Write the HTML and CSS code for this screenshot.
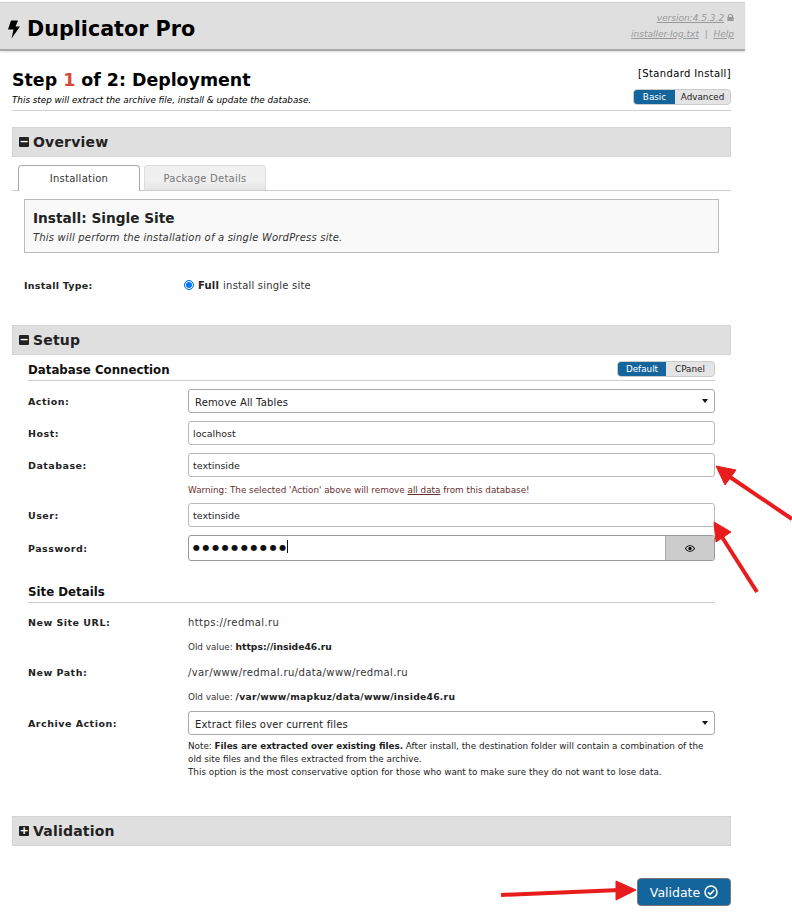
FILE: index.html
```html
<!DOCTYPE html>
<html lang="en">
<head>
  <meta charset="UTF-8" />
  <title>Duplicator Pro</title>
  <link rel="stylesheet" href="styles.css">
</head>
<body>
  <header class="top">
    <h1><svg class="bolt" viewBox="0 0 12 18"><path d="M3 0h7L7.6 6H12L3.5 18l2-9H0z"/></svg> Duplicator Pro</h1>
    <div class="top-links">
      <div><a href="#">version:4.5.3.2</a> <svg class="lock" viewBox="0 0 8 8"><path d="M1 3.5V2.5a3 2.5 0 0 1 6 0v1h.6V8H.4V3.5zM2.3 3.5h3.4v-1a1.7 1.5 0 0 0-3.4 0z"/></svg></div>
      <div><a href="#">installer-log.txt</a> &nbsp;|&nbsp; <a href="#">Help</a></div>
    </div>
  </header>

  <main class="wrap">
    <div class="step-head">
      <div>
        <h2>Step <span class="red">1</span> of 2: Deployment</h2>
        <p class="sub">This step will extract the archive file, install &amp; update the database.</p>
      </div>
      <div class="mode">
        <div class="mode-name">[Standard Install]</div>
        <div class="toggle"><span class="on">Basic</span><span>Advanced</span></div>
      </div>
    </div>

    <div class="bar"><span class="box-icon">&minus;</span>Overview</div>
    <div class="tabs">
      <div class="tab active">Installation</div>
      <div class="tab">Package Details</div>
    </div>
    <div class="panel">
      <h3>Install: Single Site</h3>
      <p>This will perform the installation of a single WordPress site.</p>
    </div>
    <div class="install-type">
      <label>Install Type:</label>
      <div class="radio-row"><span class="radio"></span><b>Full</b> install single site</div>
    </div>

    <div class="bar setup-bar"><span class="box-icon">&minus;</span>Setup</div>
    <div class="setup">
      <div class="sec-title db-title">
        <span class="db-name">Database Connection</span>
        <div class="toggle"><span class="on">Default</span><span>CPanel</span></div>
      </div>

      <div class="row"><label>Action:</label><div class="field select">Remove All Tables</div></div>
      <div class="row"><label>Host:</label><div class="field">localhost</div></div>
      <div class="row"><label>Database:</label><div class="field">textinside</div></div>
      <p class="warn">Warning: The selected 'Action' above will remove <u>all data</u> from this database!</p>
      <div class="row"><label>User:</label><div class="field">textinside</div></div>
      <div class="row pass-row">
        <label>Password:</label>
        <div class="field pass">
          <span class="dots">&#9679;&#9679;&#9679;&#9679;&#9679;&#9679;&#9679;&#9679;&#9679;&#9679;<i class="caret"></i></span>
          <span class="eye"><svg viewBox="0 0 12 8"><path d="M6 0c2.8 0 5 2 6 4-1 2-3.200 4-6 4S1 6 0 4c1-2 3.200-4 6-4zm0 1C3.900 1 2.200 2.400 1.200 4 2.200 5.600 3.900 7 6 7s3.800-1.400 4.800-3C9.800 2.400 8.100 1 6 1zm0 1a2 2 0 1 1 0 4 2 2 0 0 1 0-4z"/></svg></span>
        </div>
      </div>

      <div class="sec-title site-title"><span>Site Details</span></div>

      <div class="info"><label>New Site URL:</label><div>https://redmal.ru</div></div>
      <p class="old">Old value: <b>https://inside46.ru</b></p>
      <div class="info path"><label>New Path:</label><div>/var/www/redmal.ru/data/www/redmal.ru</div></div>
      <p class="old">Old value: <b>/var/www/mapkuz/data/www/inside46.ru</b></p>
      <div class="row archive"><label>Archive Action:</label><div class="field select">Extract files over current files</div></div>
      <p class="note">Note: <b>Files are extracted over existing files.</b> After install, the destination folder will contain a combination of the old site files and the files extracted from the archive.<br>This option is the most conservative option for those who want to make sure they do not want to lose data.</p>
    </div>

    <div class="bar valid-bar"><span class="box-icon">+</span>Validation</div>
    <div class="actions">
      <button class="validate">Validate <svg viewBox="0 0 14 14"><circle cx="7" cy="7" r="6" fill="none" stroke="#fff" stroke-width="1.500"/><path d="M4 7.200l2.200 2.200L10.200 5" fill="none" stroke="#fff" stroke-width="1.600"/></svg></button>
    </div>
  </main>

  <!-- red annotation arrows drawn over the screenshot -->
  <svg class="arrows" viewBox="0 0 792 916">
    <g fill="#e81c1c" stroke="#e81c1c">
      <path d="M792 519L727 475" stroke-width="4"/>
      <path d="M716 466L736 470 725 485z" stroke-width="1"/>
      <path d="M757 592L722 537" stroke-width="4"/>
      <path d="M714 522L731 532 716 542z" stroke-width="1"/>
      <path d="M501 895L620 890" stroke-width="4"/>
      <path d="M636 890L616 881 616 900z" stroke-width="1"/>
    </g>
  </svg>
</body>
</html>
```

FILE: styles.css
```css
body {
  font-family: "DejaVu Sans", Verdana, sans-serif;
  margin: 0;
  padding: 0;
  background: #fff;
  color: #000;
  font-size: 10px;
  height: 916px;
  overflow: hidden;
  position: relative;
}
.top {
  margin: 2px 47px 0 0;
  height: 46px;
  background: #dfdfdf;
  border-top: 1px solid #ccc;
  border-bottom: 2px solid #aaa;
  box-shadow: 0 1px 2px rgba(0,0,0,0.15);
  display: flex;
  justify-content: space-between;
  align-items: center;
  padding: 0 11px 0 8px;
}
.top h1 {
  margin: 0;
  padding-top: 6px;
  font-size: 20.700px;
  font-weight: bold;
  display: flex;
  align-items: center;
  gap: 7px;
}
.bolt {
  width: 12px;
  height: 19px;
}
.top-links {
  text-align: right;
  font-style: italic;
  font-size: 9px;
  line-height: 16px;
  color: #999;
  margin-top: -1px;
}
.top-links a {
  color: #999;
  text-decoration: underline;
}
.lock {
  width: 7px;
  height: 7px;
  fill: #999;
}
.wrap {
  padding: 0 61px 0 12px;
}
.step-head {
  display: flex;
  justify-content: space-between;
  border-bottom: 1px solid #d0d0d0;
  height: 60px;
  box-sizing: border-box;
  margin-bottom: 16px;
  padding-top: 17px;
}
.step-head h2 {
  margin: 0;
  font-size: 17.400px;
  line-height: 24px;
}
.red {
  color: #d9473b;
}
.sub {
  margin: 2px 0 0;
  font-style: italic;
  font-size: 8.800px;
  line-height: 12px;
}
.mode {
  text-align: right;
  margin-top: -1px;
}
.mode-name {
  font-size: 10px;
  letter-spacing: 0.35px;
  line-height: 14px;
  margin-bottom: 8px;
}
.toggle {
  display: inline-flex;
  font-size: 8.800px;
  font-weight: normal;
  line-height: 14px;
  background: #e4e4e4;
  border: 1px solid #ccc;
  border-radius: 4px;
  overflow: hidden;
}
.toggle span {
  width: 55px;
  text-align: center;
  color: #222;
}
.toggle .on {
  width: 41px;
  background: #13659c;
  color: #fff;
}
.db-title .toggle span {
  width: 48px;
}
.bar {
  height: 28px;
  line-height: 28px;
  background: #dfdfdf;
  border: 1px solid #d4d4d4;
  font-size: 14px;
  font-weight: bold;
  color: #222;
  display: flex;
  align-items: center;
  padding-left: 6px;
  letter-spacing: 0.2px;
}
.box-icon {
  width: 10px;
  height: 10px;
  background: #222;
  color: #fff;
  border-radius: 1px;
  font-size: 11px;
  line-height: 10px;
  text-align: center;
  margin-right: 4px;
  letter-spacing: 0;
}
.tabs {
  display: flex;
  gap: 4px;
  padding-left: 6px;
  margin-top: 8px;
  height: 25px;
  border-bottom: 1px solid #ccc;
}
.tab {
  width: 120px;
  height: 24px;
  line-height: 26px;
  text-align: center;
  font-size: 10px;
  letter-spacing: 0.25px;
  color: #777;
  border: 1px solid #ddd;
  border-bottom: none;
  border-radius: 4px 4px 0 0;
  background: linear-gradient(#f0f0f0 60%, #e4e4e4);
}
.tab.active {
  color: #333;
  background: #fff;
  border-color: #aaa;
  height: 25px;
}
.panel {
  margin: 8px 12px 0;
  height: 52px;
  background: #f9f9f9;
  border: 1px solid #bbb;
  padding-left: 8px;
}
.panel h3 {
  margin: 9px 0 0;
  font-size: 13.700px;
  line-height: 18px;
  color: #222;
}
.panel p {
  margin: 5px 0 0;
  font-style: italic;
  font-size: 10px;
  letter-spacing: 0.2px;
  line-height: 12px;
  color: #333;
}
.install-type {
  display: flex;
  margin: 26px 12px 0;
  height: 14px;
  line-height: 14px;
  font-size: 10px;
  letter-spacing: 0.2px;
}
label {
  font-weight: bold;
  font-size: 9.500px;
  color: #222;
  letter-spacing: 0.5px;
}
.install-type label {
  width: 160px;
  letter-spacing: 0.25px;
}
.radio-row {
  display: flex;
  align-items: center;
  gap: 4px;
  color: #333;
}
.radio-row b {
  color: #222;
}
.radio {
  width: 8px;
  height: 8px;
  margin-top: -3px;
  border: 1px solid #0075ff;
  border-radius: 50%;
  background: #0075ff;
  box-shadow: inset 0 0 0 1px #fff;
}
.setup-bar {
  margin-top: 32px;
}
.setup {
  margin: 0 16px;
}
.sec-title {
  display: flex;
  justify-content: space-between;
  align-items: center;
  font-size: 11.800px;
  font-weight: bold;
  color: #111;
  border-bottom: 1px solid #ccc;
}
.db-title {
  height: 24px;
  margin-bottom: 8px;
  padding-bottom: 1px;
}
.db-name {
  margin-top: 5px;
}
.db-title .toggle {
  margin-top: 4px;
}
.row {
  display: flex;
  align-items: center;
  margin-bottom: 8px;
}
.row label, .info label {
  width: 160px;
  flex: none;
}
.field {
  flex: 1;
  height: 22px;
  line-height: 23px;
  border: 1px solid #bbb;
  border-radius: 3px;
  padding-left: 4px;
  font-size: 9.500px;
  color: #222;
  position: relative;
}
.select {
  padding-left: 6px;
  border-color: #aaa;
  font-size: 10px;
  letter-spacing: 0.16px;
  line-height: 25px;
}
.select::after {
  content: "";
  position: absolute;
  right: 6px;
  top: 9px;
  border: 3.500px solid transparent;
  border-top: 4px solid #111;
  border-bottom: none;
}
.warn {
  margin: -2px 0 0 160px;
  height: 20px;
  line-height: 14px;
  font-size: 8.800px;
  color: #6a3030;
}
.pass {
  height: 24px;
  line-height: 24px;
  border-color: #999;
  padding-left: 4px;
  display: flex;
  justify-content: space-between;
}
.dots {
  font-size: 8px;
  letter-spacing: 2.600px;
  color: #111;
}
.caret {
  display: inline-block;
  width: 1px;
  height: 13px;
  margin-left: -2px;
  background: #111;
  vertical-align: -3px;
}
.eye {
  width: 48px;
  background: #ccc;
  border-left: 1px solid #aaa;
  display: flex;
  align-items: center;
  justify-content: center;
  border-radius: 0 2px 2px 0;
}
.eye svg {
  width: 10px;
  height: 7px;
}
.site-title {
  margin-top: 21px;
  height: 18px;
  margin-bottom: 12px;
  padding-bottom: 2px;
}
.site-title span {
  margin-top: 2px;
}
.info {
  display: flex;
  align-items: center;
  height: 14px;
  font-size: 10px;
  letter-spacing: 0.4px;
  color: #333;
}
.path {
  margin-top: 12px;
}
.old {
  margin: 10px 0 0 160px;
  height: 14px;
  line-height: 16px;
  font-size: 8.800px;
  color: #333;
}
.old b {
  font-size: 9.200px;
  color: #222;
}
.path + .old b {
  letter-spacing: 0.27px;
}
.archive {
  margin: 8px 0 0;
}
.note {
  margin: 5px 0 0 160px;
  font-size: 8.800px;
  line-height: 13px;
  color: #222;
}
.valid-bar {
  margin-top: 37px;
}
.actions {
  display: flex;
  justify-content: flex-end;
  margin-top: 32px;
}
.validate {
  font-family: "DejaVu Sans", Verdana, sans-serif;
  width: 94px;
  height: 28px;
  background: #13659c;
  color: #fff;
  border: 1px solid #777;
  border-radius: 4px;
  font-size: 12.500px;
  padding: 0;
  display: flex;
  align-items: center;
  justify-content: center;
  gap: 4px;
}
.validate svg {
  width: 14px;
  height: 14px;
}
.arrows {
  position: absolute;
  left: 0;
  top: 0;
  width: 792px;
  height: 916px;
  pointer-events: none;
}
```
